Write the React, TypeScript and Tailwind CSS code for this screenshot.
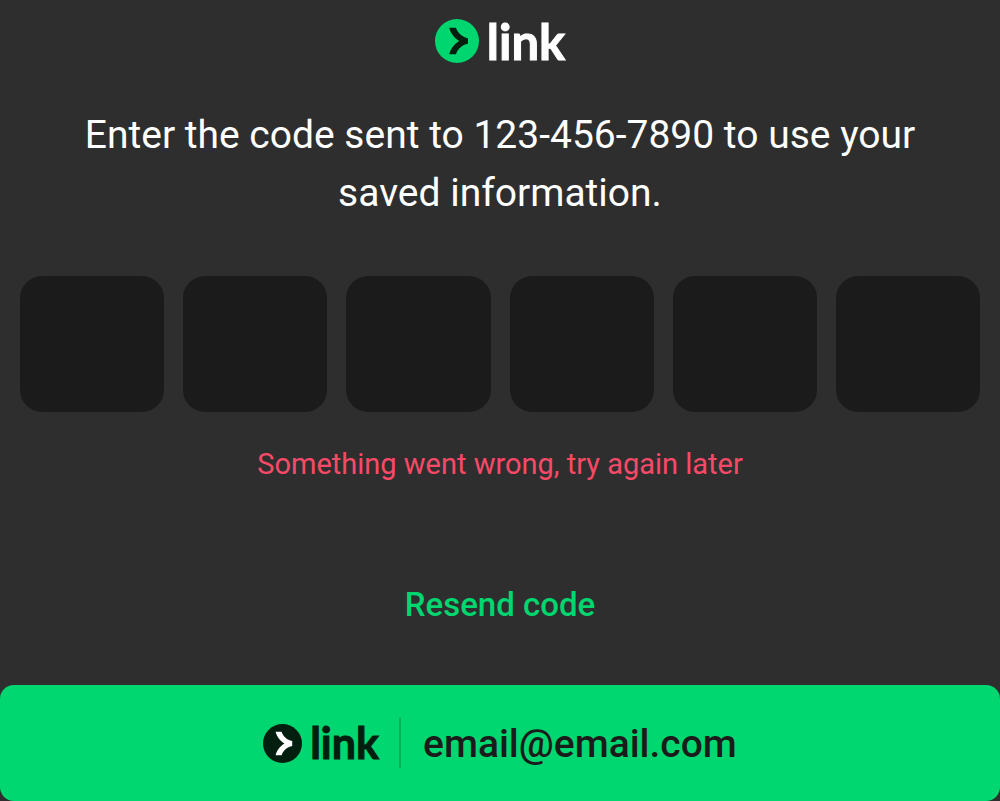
import { useState } from "react";

function LinkLogo({
  className,
  iconClass,
  textClass,
  disc,
  arrow,
}: {
  className: string;
  iconClass: string;
  textClass: string;
  disc: string;
  arrow: string;
}) {
  return (
    <span className={`flex items-center font-['Lato',sans-serif] font-bold [-webkit-text-stroke:1px_currentColor] ${className}`}>
      <svg viewBox="0 0 24 24" aria-hidden="true" className={iconClass}>
        <circle cx="12" cy="12" r="12" fill={disc} />
        <path
          fill={arrow}
          d="M11.448 4.8H7.747c.72 3.01 2.822 5.582 5.453 7.2-2.635 1.618-4.738 4.19-5.453 7.2h3.701c.912-2.77 3.437-5.174 6.538-5.664v-3.077c-3.106-.485-5.631-2.89-6.538-5.659Z"
        />
      </svg>
      <span className={textClass}>link</span>
    </span>
  );
}

const DIGITS = [0, 1, 2, 3, 4, 5];

export default function App() {
  const [code, setCode] = useState<string[]>(DIGITS.map(() => ""));

  const update = (index: number, value: string) =>
    setCode((current) => current.map((d, i) => (i === index ? value.replace(/\D/g, "").slice(-1) : d)));

  return (
    <main className="flex min-h-screen flex-col bg-[#2e2e2e] pt-[18px] font-['Roboto',sans-serif] text-white">
      <header className="flex justify-center">
        <LinkLogo
          className="gap-2"
          iconClass="size-11"
          textClass="text-[49px] leading-[46px]"
          disc="#00d66f"
          arrow="#011e0f"
        />
      </header>

      <h1 className="mt-[42px] px-16 text-center text-[39px] leading-[58px] font-normal">
        Enter the code sent to 123-456-7890 to use your saved information.
      </h1>

      <div className="mt-[54px] grid grid-cols-6 gap-[19px] px-5">
        {DIGITS.map((i) => (
          <input
            key={i}
            aria-label={`Digit ${i + 1}`}
            inputMode="numeric"
            value={code[i]}
            onChange={(e) => update(i, e.target.value)}
            className="h-[136px] w-full min-w-0 rounded-[22px] bg-[#1b1b1b] text-center text-[39px] text-white outline-none focus:ring-2 focus:ring-[#00d66f]"
          />
        ))}
      </div>

      <p role="alert" className="mt-8 text-center text-[29px] leading-10 text-[#f84a68]">
        Something went wrong, try again later
      </p>

      <button type="button" className="mx-auto mt-[101px] text-[33px] leading-10 font-medium text-[#00d66f]">
        Resend code
      </button>

      <button
        type="button"
        className="mt-auto flex h-[116px] w-full items-center justify-center rounded-[14px] bg-[#00d770] text-[#1b1b1b]"
      >
        <LinkLogo
          className="gap-2 text-[#011e0f]"
          iconClass="size-[39px]"
          textClass="text-[43px] leading-[46px]"
          disc="#011e0f"
          arrow="#ffffff"
        />
        <span className="mr-[22px] ml-5 h-[50px] w-[2px] bg-[#00b05a]" />
        <span className="pt-[2px] text-[39px] leading-[46px] font-medium">email@email.com</span>
      </button>
    </main>
  );
}
